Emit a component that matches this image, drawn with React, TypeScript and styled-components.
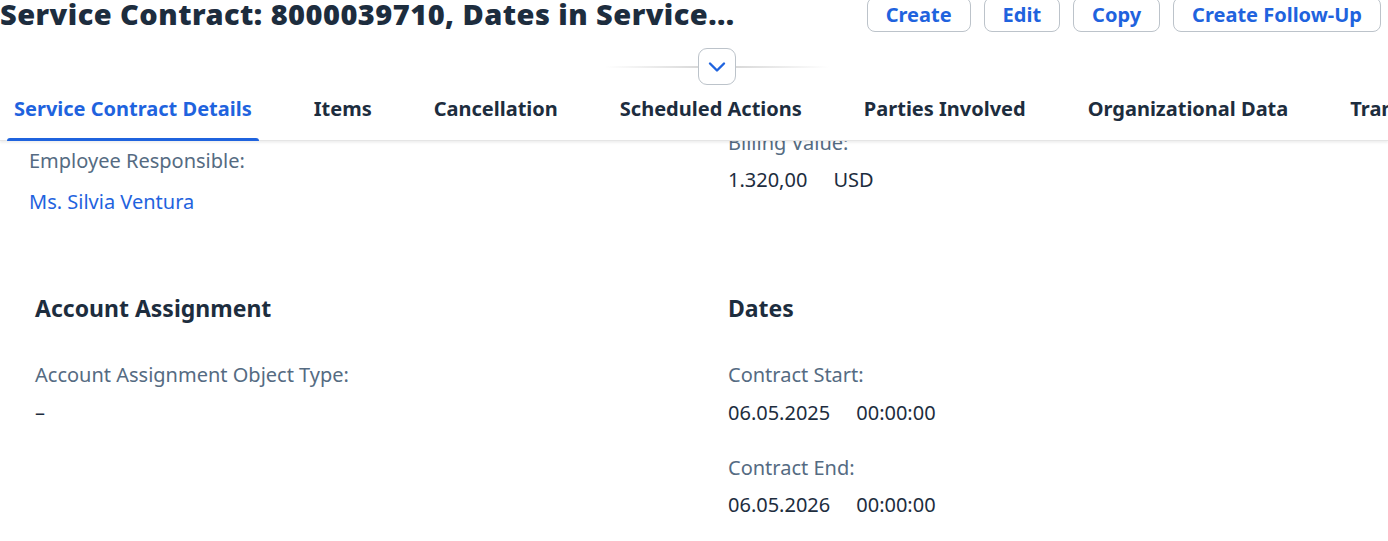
import * as React from 'react';
import styled, { createGlobalStyle } from 'styled-components';

const BLUE = '#1f63de';

const GlobalStyle = createGlobalStyle`
    html, body {
        margin: 0;
        padding: 0;
        background: #ffffff;
    }
    body {
        font-family: "Noto Sans", "Liberation Sans", sans-serif;
        color: #1d2d3e;
    }
`;

const Page = styled.div`
    width: 1388px;
    height: 541px;
    overflow: hidden;
    background: #fff;
    display: flex;
    flex-direction: column;
`;

const HeaderBar = styled.div`
    display: flex;
    align-items: flex-start;
    justify-content: space-between;
    height: 34px;
    margin-top: -3px;
    padding-right: 7px;
`;

const Title = styled.h1`
    margin: 0;
    font-size: 29px;
    line-height: 34px;
    font-weight: 900;
    letter-spacing: 0.45px;
    white-space: nowrap;
    color: #1d2d3e;
`;

const Actions = styled.div`
    display: flex;
    gap: 13px;
`;

const ActionButton = styled.button`
    height: 35px;
    padding: 0 18px;
    border: 1px solid #bcc3ca;
    border-radius: 8px;
    background: #fff;
    color: ${BLUE};
    font-family: inherit;
    font-size: 20px;
    font-weight: 700;
    cursor: pointer;
`;

const CollapseRow = styled.div`
    height: 54px;
    display: flex;
    align-items: flex-end;
    justify-content: center;
    padding-left: 46px;
`;

const CollapseLine = styled.div<{ side: 'left' | 'right' }>`
    width: 93px;
    height: 2px;
    margin-bottom: 17px;
    background: linear-gradient(
        ${props => props.side === 'left' ? 'to right' : 'to left'},
        rgba(217, 217, 217, 0),
        #d9d9d9
    );
`;

const CollapseButton = styled.button`
    width: 38px;
    height: 37px;
    border: 1px solid #bcc3ca;
    border-radius: 9px;
    background: #fff;
    display: flex;
    align-items: center;
    justify-content: center;
    padding: 0;
    cursor: pointer;
`;

const TabBar = styled.div`
    display: flex;
    height: 55px;
    padding-left: 7px;
    gap: 48px;
    border-bottom: 1px solid #e5e5e5;
    box-shadow: 0 2px 2px rgba(0, 0, 0, 0.06);
    position: relative;
    z-index: 1;
    white-space: nowrap;
`;

const Tab = styled.div<{ active?: boolean }>`
    position: relative;
    display: flex;
    align-items: center;
    padding: 0 7px 8px;
    font-size: 20px;
    font-weight: 700;
    color: ${props => props.active ? BLUE : '#1d2d3e'};
    cursor: pointer;
    &::after {
        content: '';
        display: ${props => props.active ? 'block' : 'none'};
        position: absolute;
        left: 0;
        right: 0;
        bottom: -1px;
        height: 3px;
        border-radius: 3px 3px 0 0;
        background: ${BLUE};
    }
`;

const Content = styled.div`
    flex: 1;
    overflow: hidden;
`;

const Section = styled.div<{ left: number; top: number }>`
    display: grid;
    grid-template-columns: ${props => 728 - props.left}px 1fr;
    padding-left: ${props => props.left}px;
    padding-top: ${props => props.top}px;
`;

const Column = styled.div<{ shift?: number }>`
    display: flex;
    flex-direction: column;
    margin-top: ${props => props.shift || 0}px;
`;

const SectionTitle = styled.h2`
    margin: 0 0 39px;
    font-size: 23px;
    line-height: 30px;
    font-weight: 700;
    color: #1d2d3e;
`;

const Label = styled.div<{ gap: number }>`
    font-size: 20px;
    line-height: 26px;
    color: #556b82;
    margin-bottom: ${props => props.gap}px;
`;

const Value = styled.div<{ after?: number }>`
    font-size: 20px;
    line-height: 26px;
    color: #1d2d3e;
    display: flex;
    gap: 26px;
    margin-bottom: ${props => props.after || 0}px;
`;

const Link = styled.a`
    font-size: 20px;
    line-height: 26px;
    color: ${BLUE};
    text-decoration: none;
    cursor: pointer;
`;

const tabs = [
    'Service Contract Details',
    'Items',
    'Cancellation',
    'Scheduled Actions',
    'Parties Involved',
    'Organizational Data',
    'Transaction History',
];

export default function App() {
    return (
        <Page>
            <GlobalStyle />
            <HeaderBar>
                <Title>Service Contract: 8000039710, Dates in Service...</Title>
                <Actions>
                    <ActionButton>Create</ActionButton>
                    <ActionButton>Edit</ActionButton>
                    <ActionButton>Copy</ActionButton>
                    <ActionButton>Create Follow-Up</ActionButton>
                </Actions>
            </HeaderBar>
            <CollapseRow>
                <CollapseLine side="left" />
                <CollapseButton>
                    <svg width="18" height="18" viewBox="0 0 18 18">
                        <path d="M2 5.5 L9 12.5 L16 5.5" fill="none" stroke={BLUE} strokeWidth="2.4" strokeLinecap="round" strokeLinejoin="round" />
                    </svg>
                </CollapseButton>
                <CollapseLine side="right" />
            </CollapseRow>
            <TabBar>
                {tabs.map((t, i) => (
                    <Tab key={t} active={i === 0}>{t}</Tab>
                ))}
            </TabBar>
            <Content>
                <Section left={29} top={7}>
                    <Column>
                        <Label gap={15}>Employee Responsible:</Label>
                        <Link>Ms. Silvia Ventura</Link>
                    </Column>
                    <Column shift={-18}>
                        <Label gap={11}>Billing Value:</Label>
                        <Value>
                            <span>1.320,00</span>
                            <span>USD</span>
                        </Value>
                    </Column>
                </Section>
                <Section left={35} top={78}>
                    <Column>
                        <SectionTitle>Account Assignment</SectionTitle>
                        <Label gap={12}>Account Assignment Object Type:</Label>
                        <Value>–</Value>
                    </Column>
                    <Column>
                        <SectionTitle>Dates</SectionTitle>
                        <Label gap={12}>Contract Start:</Label>
                        <Value after={29}>
                            <span>06.05.2025</span>
                            <span>00:00:00</span>
                        </Value>
                        <Label gap={11}>Contract End:</Label>
                        <Value>
                            <span>06.05.2026</span>
                            <span>00:00:00</span>
                        </Value>
                    </Column>
                </Section>
            </Content>
        </Page>
    );
}
